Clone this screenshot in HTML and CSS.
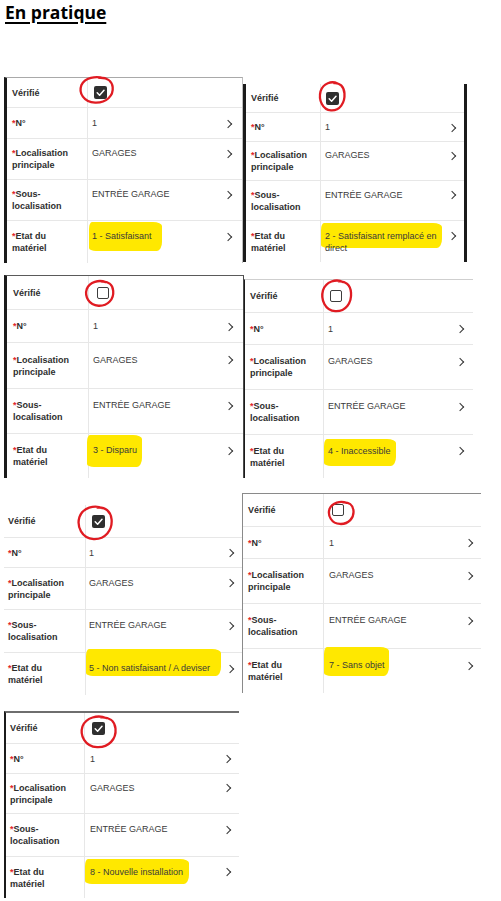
FILE: index.html
```html
<!DOCTYPE html>
<html lang="fr">
<head>
<meta charset="utf-8">
<title>En pratique</title>
<link rel="stylesheet" href="styles.css">
</head>
<body>
<h1 class="title">En pratique</h1>

<div class="pair pair-1">
  <section class="card card-1">
    <div class="row row-v"><div class="lab">Vérifié</div><div class="val"><span class="cb on"><svg class="ring" viewBox="0 0 40 32" preserveAspectRatio="none"><path d="M27 3.5C19 .5 7 3 3.5 11 .5 19 6 29 18 29.5 30 30 37.5 22 36.5 13 35.8 6 30 2.5 22 3"/></svg><svg class="tick" viewBox="0 0 13 13"><polyline points="3.2,6.8 5.6,9.2 10,4.2"/></svg></span></div><div class="chev"></div></div>
    <div class="row row-n"><div class="lab"><span class="req">*</span>N°</div><div class="val">1</div><div class="chev on"></div></div>
    <div class="row row-l two"><div class="lab"><span><span class="req">*</span>Localisation<br>principale</span></div><div class="val">GARAGES</div><div class="chev on"></div></div>
    <div class="row row-s two"><div class="lab"><span><span class="req">*</span>Sous-<br>localisation</span></div><div class="val">ENTRÉE GARAGE</div><div class="chev on"></div></div>
    <div class="row row-e two"><div class="lab"><span><span class="req">*</span>Etat du<br>matériel</span></div><div class="val"><span class="mark mark-1">1 - Satisfaisant</span></div><div class="chev on"></div></div>
  </section>
  <section class="card card-2">
    <div class="row row-v"><div class="lab">Vérifié</div><div class="val"><span class="cb on"><svg class="ring" viewBox="0 0 40 32" preserveAspectRatio="none"><path d="M27 3.5C19 .5 7 3 3.5 11 .5 19 6 29 18 29.5 30 30 37.5 22 36.5 13 35.8 6 30 2.5 22 3"/></svg><svg class="tick" viewBox="0 0 13 13"><polyline points="3.2,6.8 5.6,9.2 10,4.2"/></svg></span></div><div class="chev"></div></div>
    <div class="row row-n"><div class="lab"><span class="req">*</span>N°</div><div class="val">1</div><div class="chev on"></div></div>
    <div class="row row-l two"><div class="lab"><span><span class="req">*</span>Localisation<br>principale</span></div><div class="val">GARAGES</div><div class="chev on"></div></div>
    <div class="row row-s two"><div class="lab"><span><span class="req">*</span>Sous-<br>localisation</span></div><div class="val">ENTRÉE GARAGE</div><div class="chev on"></div></div>
    <div class="row row-e two"><div class="lab"><span><span class="req">*</span>Etat du<br>matériel</span></div><div class="val"><span class="mark mark-2">2 - Satisfaisant remplacé en</span><br>direct</div><div class="chev on"></div></div>
  </section>
</div>

<div class="pair pair-2">
  <section class="card card-3">
    <div class="row row-v"><div class="lab">Vérifié</div><div class="val"><span class="cb off"><svg class="ring" viewBox="0 0 40 32" preserveAspectRatio="none"><path d="M27 3.5C19 .5 7 3 3.5 11 .5 19 6 29 18 29.5 30 30 37.5 22 36.5 13 35.8 6 30 2.5 22 3"/></svg></span></div><div class="chev"></div></div>
    <div class="row row-n"><div class="lab"><span class="req">*</span>N°</div><div class="val">1</div><div class="chev on"></div></div>
    <div class="row row-l two"><div class="lab"><span><span class="req">*</span>Localisation<br>principale</span></div><div class="val">GARAGES</div><div class="chev on"></div></div>
    <div class="row row-s two"><div class="lab"><span><span class="req">*</span>Sous-<br>localisation</span></div><div class="val">ENTRÉE GARAGE</div><div class="chev on"></div></div>
    <div class="row row-e two"><div class="lab"><span><span class="req">*</span>Etat du<br>matériel</span></div><div class="val"><span class="mark mark-3">3 - Disparu</span></div><div class="chev on"></div></div>
  </section>
  <section class="card card-4">
    <div class="row row-v"><div class="lab">Vérifié</div><div class="val"><span class="cb off"><svg class="ring" viewBox="0 0 40 32" preserveAspectRatio="none"><path d="M27 3.5C19 .5 7 3 3.5 11 .5 19 6 29 18 29.5 30 30 37.5 22 36.5 13 35.8 6 30 2.5 22 3"/></svg></span></div><div class="chev"></div></div>
    <div class="row row-n"><div class="lab"><span class="req">*</span>N°</div><div class="val">1</div><div class="chev on"></div></div>
    <div class="row row-l two"><div class="lab"><span><span class="req">*</span>Localisation<br>principale</span></div><div class="val">GARAGES</div><div class="chev on"></div></div>
    <div class="row row-s two"><div class="lab"><span><span class="req">*</span>Sous-<br>localisation</span></div><div class="val">ENTRÉE GARAGE</div><div class="chev on"></div></div>
    <div class="row row-e two"><div class="lab"><span><span class="req">*</span>Etat du<br>matériel</span></div><div class="val"><span class="mark mark-4">4 - Inaccessible</span></div><div class="chev on"></div></div>
  </section>
</div>

<div class="pair pair-3">
  <section class="card card-5">
    <div class="row row-v"><div class="lab">Vérifié</div><div class="val"><span class="cb on"><svg class="ring" viewBox="0 0 40 32" preserveAspectRatio="none"><path d="M27 3.5C19 .5 7 3 3.5 11 .5 19 6 29 18 29.5 30 30 37.5 22 36.5 13 35.8 6 30 2.5 22 3"/></svg><svg class="tick" viewBox="0 0 13 13"><polyline points="3.2,6.8 5.6,9.2 10,4.2"/></svg></span></div><div class="chev"></div></div>
    <div class="row row-n"><div class="lab"><span class="req">*</span>N°</div><div class="val">1</div><div class="chev on"></div></div>
    <div class="row row-l two"><div class="lab"><span><span class="req">*</span>Localisation<br>principale</span></div><div class="val">GARAGES</div><div class="chev on"></div></div>
    <div class="row row-s two"><div class="lab"><span><span class="req">*</span>Sous-<br>localisation</span></div><div class="val">ENTRÉE GARAGE</div><div class="chev on"></div></div>
    <div class="row row-e two"><div class="lab"><span><span class="req">*</span>Etat du<br>matériel</span></div><div class="val"><span class="mark mark-5">5 - Non satisfaisant / A deviser</span></div><div class="chev on"></div></div>
  </section>
  <section class="card card-6">
    <div class="row row-v"><div class="lab">Vérifié</div><div class="val"><span class="cb off"><svg class="ring" viewBox="0 0 40 32" preserveAspectRatio="none"><path d="M27 3.5C19 .5 7 3 3.5 11 .5 19 6 29 18 29.5 30 30 37.5 22 36.5 13 35.8 6 30 2.5 22 3"/></svg></span></div><div class="chev"></div></div>
    <div class="row row-n"><div class="lab"><span class="req">*</span>N°</div><div class="val">1</div><div class="chev on"></div></div>
    <div class="row row-l two"><div class="lab"><span><span class="req">*</span>Localisation<br>principale</span></div><div class="val">GARAGES</div><div class="chev on"></div></div>
    <div class="row row-s two"><div class="lab"><span><span class="req">*</span>Sous-<br>localisation</span></div><div class="val">ENTRÉE GARAGE</div><div class="chev on"></div></div>
    <div class="row row-e two"><div class="lab"><span><span class="req">*</span>Etat du<br>matériel</span></div><div class="val"><span class="mark mark-6">7 - Sans objet</span></div><div class="chev on"></div></div>
  </section>
</div>

<div class="pair pair-4">
  <section class="card card-7">
    <div class="row row-v"><div class="lab">Vérifié</div><div class="val"><span class="cb on"><svg class="ring" viewBox="0 0 40 32" preserveAspectRatio="none"><path d="M27 3.5C19 .5 7 3 3.5 11 .5 19 6 29 18 29.5 30 30 37.5 22 36.5 13 35.8 6 30 2.5 22 3"/></svg><svg class="tick" viewBox="0 0 13 13"><polyline points="3.2,6.8 5.6,9.2 10,4.2"/></svg></span></div><div class="chev"></div></div>
    <div class="row row-n"><div class="lab"><span class="req">*</span>N°</div><div class="val">1</div><div class="chev on"></div></div>
    <div class="row row-l two"><div class="lab"><span><span class="req">*</span>Localisation<br>principale</span></div><div class="val">GARAGES</div><div class="chev on"></div></div>
    <div class="row row-s two"><div class="lab"><span><span class="req">*</span>Sous-<br>localisation</span></div><div class="val">ENTRÉE GARAGE</div><div class="chev on"></div></div>
    <div class="row row-e two"><div class="lab"><span><span class="req">*</span>Etat du<br>matériel</span></div><div class="val"><span class="mark mark-7">8 - Nouvelle installation</span></div><div class="chev on"></div></div>
  </section>
</div>
</body>
</html>
```

FILE: styles.css
```css
* { box-sizing: border-box; }

body {
  margin: 0;
  width: 501px;
  background: #fff;
  font-family: "Liberation Sans", Arial, sans-serif;
  color: #333;
}

.title {
  margin: 0;
  padding: 1px 0 0 5px;
  font-family: "Open Sans", "DejaVu Sans", sans-serif;
  font-weight: 700;
  font-size: 17.5px;
  line-height: 23px;
  color: #000;
  text-decoration: underline;
  text-decoration-thickness: 1.5px;
  text-underline-offset: 3px;
}

.pair { display: flex; align-items: flex-start; }
.pair-1 { margin-top: 53px; }
.pair-2 { margin-top: 12px; }
.pair-3 { margin-top: 15px; }
.pair-4 { margin-top: 16px; }

.card {
  background: #fff;
  position: relative;
  flex: none;
}

.row {
  display: grid;
  grid-template-columns: var(--lw) 1fr auto;
  align-items: center;
  border-bottom: 1px solid #e7e7e7;
  font-size: 9px;
  line-height: 12px;
}
.row:last-child { border-bottom: 0; }
.row-v { height: var(--hv); }
.row-n { height: var(--hn); }
.row-l { height: var(--hl); }
.row-s { height: var(--hs); }
.row-e { height: var(--he); }

.lab {
  align-self: stretch;
  display: flex;
  align-items: center;
  padding-left: var(--lp);
  border-right: 1px solid #e7e7e7;
  font-weight: 700;
  color: #2e2e2e;
}
.req { color: #e0262a; }

.val {
  padding-left: var(--vp);
  color: #3a3a3a;
  white-space: nowrap;
  min-width: 0;
}
.row.two .val { height: 24px; }

.chev {
  height: 12px;
  padding-right: var(--cr);
  padding-top: 3.5px;
  display: flex;
  align-items: flex-start;
}
.row.two .chev { height: 24px; }
.chev.on::before {
  content: "";
  display: block;
  width: 5px;
  height: 5px;
  margin-left: -2px;
  border-top: 1.4px solid #333;
  border-right: 1.4px solid #333;
  transform: rotate(45deg);
}

/* checkbox */
.cb {
  position: relative;
  display: inline-block;
  vertical-align: middle;
  width: 13px;
  height: 13px;
  margin-left: var(--cbx);
  border-radius: 2px;
}
.cb.on { background: #2f2f2f; }
.cb.off { border: 1.6px solid #3d3d3d; background: #fff; width: 12px; height: 12px; }
.tick {
  position: absolute;
  inset: 0;
  width: 13px;
  height: 13px;
}
.tick polyline {
  fill: none;
  stroke: #fff;
  stroke-width: 1.5;
  stroke-linecap: round;
  stroke-linejoin: round;
}
.ring {
  position: absolute;
  left: var(--rx);
  top: var(--ry);
  width: var(--rw);
  height: var(--rh);
  overflow: visible;
  z-index: 2;
}
.ring path {
  fill: none;
  stroke: #e01b22;
  stroke-width: 2.3;
  vector-effect: non-scaling-stroke;
  stroke-linecap: round;
}

/* yellow marker highlight */
.mark {
  display: inline-block;
  background: #ffe800;
  border-radius: 3px 9px 5px 7px / 7px 4px 9px 3px;
}
.mark-1 { padding: 8px 10px 9px 3px; margin: -8px -10px -9px -3px; }
.mark-2 { padding: 7px 5px 6px 4px; margin: -7px -5px -6px -4px; }
.mark-3 { padding: 9px 5px 11px 6px; margin: -9px -5px -11px -6px; }
.mark-4 { padding: 6px 5px 9px 4px; margin: -6px -5px -9px -4px; }
.mark-5 { padding: 13px 11px 2px 3px; margin: -13px -11px -2px -3px; }
.mark-6 { padding: 12px 4px 5px 5px; margin: -12px -4px -5px -5px; }
.mark-7 { padding: 7px 6px 6px 5px; margin: -7px -6px -6px -5px; }

/* individual screenshots */
.card-1 {
  width: 239px; margin-left: 4px;
  border-left: 3px solid #1b1b1b;
  border-top: 1px solid #a9a9a9;
  border-right: 1px solid #bdbdbd;
  --lw: 81px; --lp: 5px; --vp: 4px; --cr: 11px; --cbx: 2px;
  --hv: 30px; --hn: 31px; --hl: 41px; --hs: 41px; --he: 42px;
  --rx: -16px; --ry: -11px; --rw: 38px; --rh: 30px;
}
.card-2 {
  width: 224px; margin-top: 7px;
  border-left: 3px solid #1b1b1b;
  border-right: 3px solid #1b1b1b;
  --lw: 75px; --lp: 5px; --vp: 4px; --cr: 9px; --cbx: 1px;
  --hv: 29px; --hn: 29px; --hl: 39px; --hs: 40px; --he: 41px;
  --rx: -8px; --ry: -12px; --rw: 29px; --rh: 33px;
}
.card-3 {
  width: 240px; margin-left: 4px;
  border-left: 3px solid #1b1b1b;
  border-top: 1px solid #5a5a5a;
  border-right: 1px solid #4a4a4a;
  --lw: 82px; --lp: 6px; --vp: 4px; --cr: 11px; --cbx: 4px;
  --hv: 34px; --hn: 33px; --hl: 46px; --hs: 45px; --he: 44px;
  --rx: -14px; --ry: -9px; --rw: 32px; --rh: 29px;
}
.card-4 {
  width: 229px;
  margin-top: 4px;
  border-left: 1px solid #1b1b1b;
  border-top: 1px solid #cfcfcf;
  --lw: 79px; --lp: 5px; --vp: 4px; --cr: 10px; --cbx: 2px;
  --hv: 33px; --hn: 32px; --hl: 45px; --hs: 45px; --he: 43px;
  --rx: -11px; --ry: -13px; --rw: 34px; --rh: 36px;
}
.card-5 {
  width: 238px; margin-left: 4px; margin-top: 12px;
  --lw: 82px; --lp: 4px; --vp: 3px; --cr: 9px; --cbx: 3px;
  --hv: 33px; --hn: 30px; --hl: 42px; --hs: 43px; --he: 42px;
  --rx: -16px; --ry: -11px; --rw: 39px; --rh: 38px;
}
.card-6 {
  width: 239px;
  border-left: 1px solid #8a8a8a;
  border-top: 1px solid #8a8a8a;
  --lw: 81px; --lp: 5px; --vp: 5px; --cr: 9px; --cbx: 3px;
  --hv: 33px; --hn: 32px; --hl: 45px; --hs: 45px; --he: 44px;
  --rx: -6px; --ry: -5px; --rw: 29px; --rh: 26px;
}
.card-7 {
  width: 235px; margin-left: 4px;
  border-left: 2px solid #1b1b1b;
  border-top: 2px solid #6e6e6e;
  --lw: 79px; --lp: 4px; --vp: 5px; --cr: 9px; --cbx: 2px;
  --hv: 31px; --hn: 30px; --hl: 40px; --hs: 43px; --he: 41px;
  --rx: -13px; --ry: -8px; --rw: 40px; --rh: 36px;
}
```
